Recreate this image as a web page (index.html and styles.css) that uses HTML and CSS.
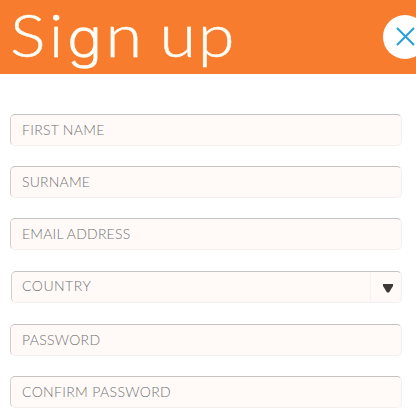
FILE: index.html
```
<!DOCTYPE html>
<html lang="en">
<head>
<meta charset="utf-8">
<title>Sign up</title>
<link rel="stylesheet" href="styles.css">
</head>
<body>
<header class="header">
  <h1 class="title"><span class="lead">Si<span class="round">g</span></span>n up</h1>
  <button class="close" aria-label="Close">
    <svg width="20" height="20" viewBox="0 0 20 20"><path d="M2 1 19 18M19 1 2 18" fill="none" stroke="#299fd8" stroke-width="2.1"/></svg>
  </button>
</header>
<main class="form">
  <div class="field"><span class="first">FIRST NAME</span></div>
  <div class="field"><span class="surname">SURNAME</span></div>
  <div class="field"><span class="email">EMAIL ADDRESS</span></div>
  <div class="field select"><span class="country">COUNTRY</span>
    <div class="arrow"><svg width="10" height="9" viewBox="0 0 10 9"><path d="M0 0H10V2L6 8.5H4L0 2Z" fill="#3d3937"/></svg></div>
  </div>
  <div class="field"><span class="password">PASSWORD</span></div>
  <div class="field"><span class="confirm">CONFIRM PASSWORD</span></div>
</main>
</body>
</html>
```
FILE: styles.css
```
* { box-sizing: border-box; }
body {
  margin: 0;
  height: 416px;
  overflow: hidden;
  background: #fff;
  font-family: Lato, "Open Sans", sans-serif;
}
.header {
  display: flex;
  justify-content: space-between;
  height: 74px;
  padding-left: 10px;
  background: #f87c2d;
}
.title {
  margin: 0;
  font-size: 59.5px;
  line-height: 68px;
  font-weight: 300;
  letter-spacing: 1.6px;
  word-spacing: -4px;
  color: #fffdf5;
  white-space: nowrap;
  transform: scaleX(1.12);
  transform-origin: left;
  -webkit-text-stroke: .5px #fffdf5;
}
.lead { letter-spacing: 3.3px; }
.round {
  font-family: Inter, sans-serif;
  font-size: 52px;
  font-weight: 200;
  line-height: 1;
  -webkit-text-stroke: 1.3px #fffdf5;
}
.close {
  flex: none;
  display: flex;
  align-items: center;
  justify-content: center;
  width: 44px;
  height: 44px;
  margin: 15px -11px 0 0;
  padding: 0;
  border: 0;
  border-radius: 50%;
  background: #fff;
}
.form {
  display: grid;
  grid-template-rows: 52px 52px 53px 53px 52px 32px;
  padding: 40px 14px 0 10px;
}
.field {
  display: flex;
  align-items: center;
  height: 32px;
  padding-left: 11px;
  border: 1px solid #f3efee;
  border-top-color: #c6c3c3;
  border-left-color: #d2cfd0;
  border-radius: 5px;
  background: #fffaf8;
  color: #707373;
  font-size: 14px;
  font-weight: 300;
  line-height: 20px;
  white-space: nowrap;
}
.select { margin-left: 1px; padding-left: 10px; }
.select span { margin-top: -2px; }
.arrow {
  display: flex;
  align-items: center;
  justify-content: center;
  width: 31px;
  height: 30px;
  margin-left: auto;
  padding: 2px 0 0 3px;
  border-left: 1px solid #f7f2f1;
}
.first { letter-spacing: .3px; }
.surname { letter-spacing: .2px; }
.email { letter-spacing: .2px; }
.country { letter-spacing: .5px; }
.password { letter-spacing: .3px; }
.confirm { letter-spacing: .35px; }
```
